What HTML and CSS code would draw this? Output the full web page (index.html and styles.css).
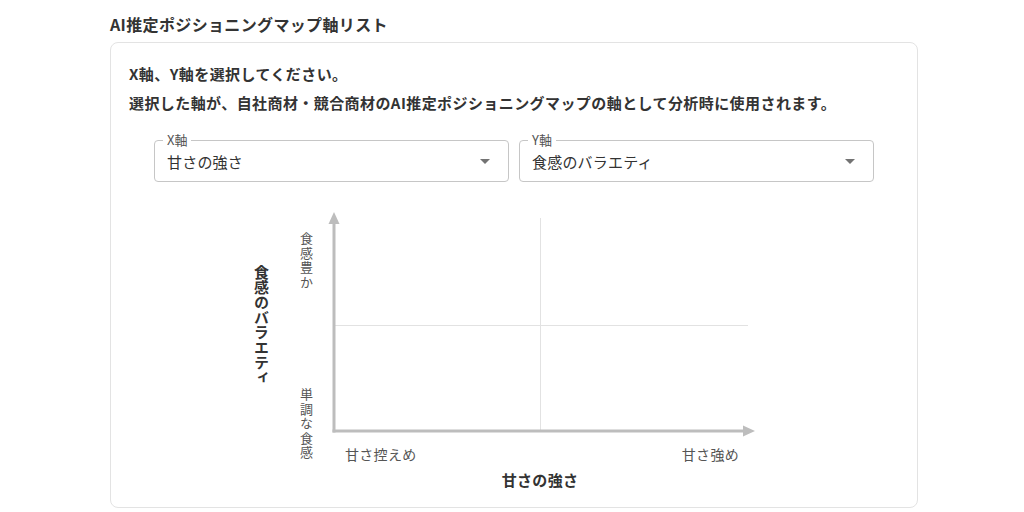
FILE: index.html
```html
<!DOCTYPE html>
<html lang="ja">
<head>
<meta charset="utf-8">
<title>AI推定ポジショニングマップ軸リスト</title>
<link rel="stylesheet" href="styles.css">
</head>
<body>
<main class="page">
  <h2 class="title">AI推定ポジショニングマップ軸リスト</h2>
  <section class="card">
    <p class="lead">X軸、Y軸を選択してください。</p>
    <p class="lead">選択した軸が、自社商材・競合商材のAI推定ポジショニングマップの軸として分析時に使用されます。</p>
    <div class="selects">
      <div class="select">
        <span class="select-label">X軸</span>
        <span class="select-value">甘さの強さ</span>
        <svg class="select-arrow" viewBox="0 0 24 24" width="24" height="24"><path d="M7 10l5 5 5-5z"/></svg>
      </div>
      <div class="select">
        <span class="select-label">Y軸</span>
        <span class="select-value">食感のバラエティ</span>
        <svg class="select-arrow" viewBox="0 0 24 24" width="24" height="24"><path d="M7 10l5 5 5-5z"/></svg>
      </div>
    </div>
    <div class="chart">
      <svg class="chart-lines" width="720" height="295" viewBox="0 0 720 295">
        <line x1="386.5" y1="18" x2="386.5" y2="230" stroke="#e2e2e2" stroke-width="1"/>
        <line x1="181" y1="125.5" x2="594" y2="125.5" stroke="#e2e2e2" stroke-width="1"/>
        <line x1="180" y1="22" x2="180" y2="232.5" stroke="#bdbdbd" stroke-width="3"/>
        <polygon points="180,12 174.5,24 185.5,24" fill="#bdbdbd"/>
        <line x1="178.5" y1="231" x2="590" y2="231" stroke="#bdbdbd" stroke-width="3"/>
        <polygon points="601,231 589,225.5 589,236.5" fill="#bdbdbd"/>
      </svg>
      <span class="vlabel y-high">食感豊か</span>
      <span class="vlabel y-low">単調な食感</span>
      <span class="vlabel y-title">食感のバラエティ</span>
      <span class="hlabel x-low">甘さ控えめ</span>
      <span class="hlabel x-high">甘さ強め</span>
      <span class="hlabel x-title">甘さの強さ</span>
    </div>
  </section>
</main>
</body>
</html>
```
FILE: styles.css
```css
* { box-sizing: border-box; }

html, body {
  margin: 0;
  padding: 0;
  background: #ffffff;
}

body {
  font-family: "Noto Sans CJK JP", "Noto Sans", sans-serif;
  color: #333333;
}

.page {
  padding: 12px 0 0 110px;
  width: 1024px;
  height: 512px;
  overflow: hidden;
}

.title {
  margin: 0;
  font-size: 16px;
  line-height: 24px;
  font-weight: 700;
  letter-spacing: 0.35px;
  color: #333333;
}

.card {
  margin-top: 6px;
  width: 808px;
  height: 466px;
  border: 1px solid #e3e3e3;
  border-radius: 8px;
  padding: 16px 18px 0 18px;
}

.lead {
  margin: 0;
  font-size: 15px;
  line-height: 29px;
  font-weight: 700;
  letter-spacing: 0.42px;
  color: #333333;
}

.selects {
  width: 720px;
  margin: 23px auto 0;
  display: flex;
  gap: 10px;
}

.select {
  position: relative;
  flex: 1;
  height: 42px;
  border: 1px solid #c6c6c6;
  border-radius: 4px;
  display: flex;
  align-items: center;
  padding: 0 12px;
}

.select-label {
  position: absolute;
  left: 8px;
  top: -9px;
  padding: 0 4px;
  background: #ffffff;
  font-size: 13px;
  line-height: 16px;
  color: #555555;
}

.select-value {
  flex: 1;
  font-size: 15px;
  line-height: 20px;
  letter-spacing: 0.2px;
  color: #333333;
  padding-top: 2px;
}

.select-arrow {
  fill: #737373;
  margin-right: -1px;
}

.chart {
  position: relative;
  width: 720px;
  height: 295px;
  margin: 18px auto 0;
}

.chart-lines {
  position: absolute;
  left: 0;
  top: 0;
}

.vlabel {
  position: absolute;
  writing-mode: vertical-rl;
  text-orientation: upright;
  font-size: 13px;
  line-height: 14px;
  letter-spacing: 1.4px;
  color: #555555;
}

.y-high { left: 145px; top: 32px; }
.y-low { left: 145px; top: 188px; }

.y-title {
  left: 100px;
  top: 65px;
  font-size: 15px;
  line-height: 15px;
  letter-spacing: 0;
  font-weight: 700;
  color: #333333;
}

.hlabel {
  position: absolute;
  font-size: 14px;
  line-height: 20px;
  letter-spacing: 0.3px;
  color: #555555;
  white-space: nowrap;
}

.x-low { left: 191px; top: 244px; }
.x-high { right: 135px; top: 244px; }

.x-title {
  left: 386px;
  top: 270px;
  transform: translateX(-50%);
  font-size: 15px;
  font-weight: 700;
  color: #333333;
}
```
